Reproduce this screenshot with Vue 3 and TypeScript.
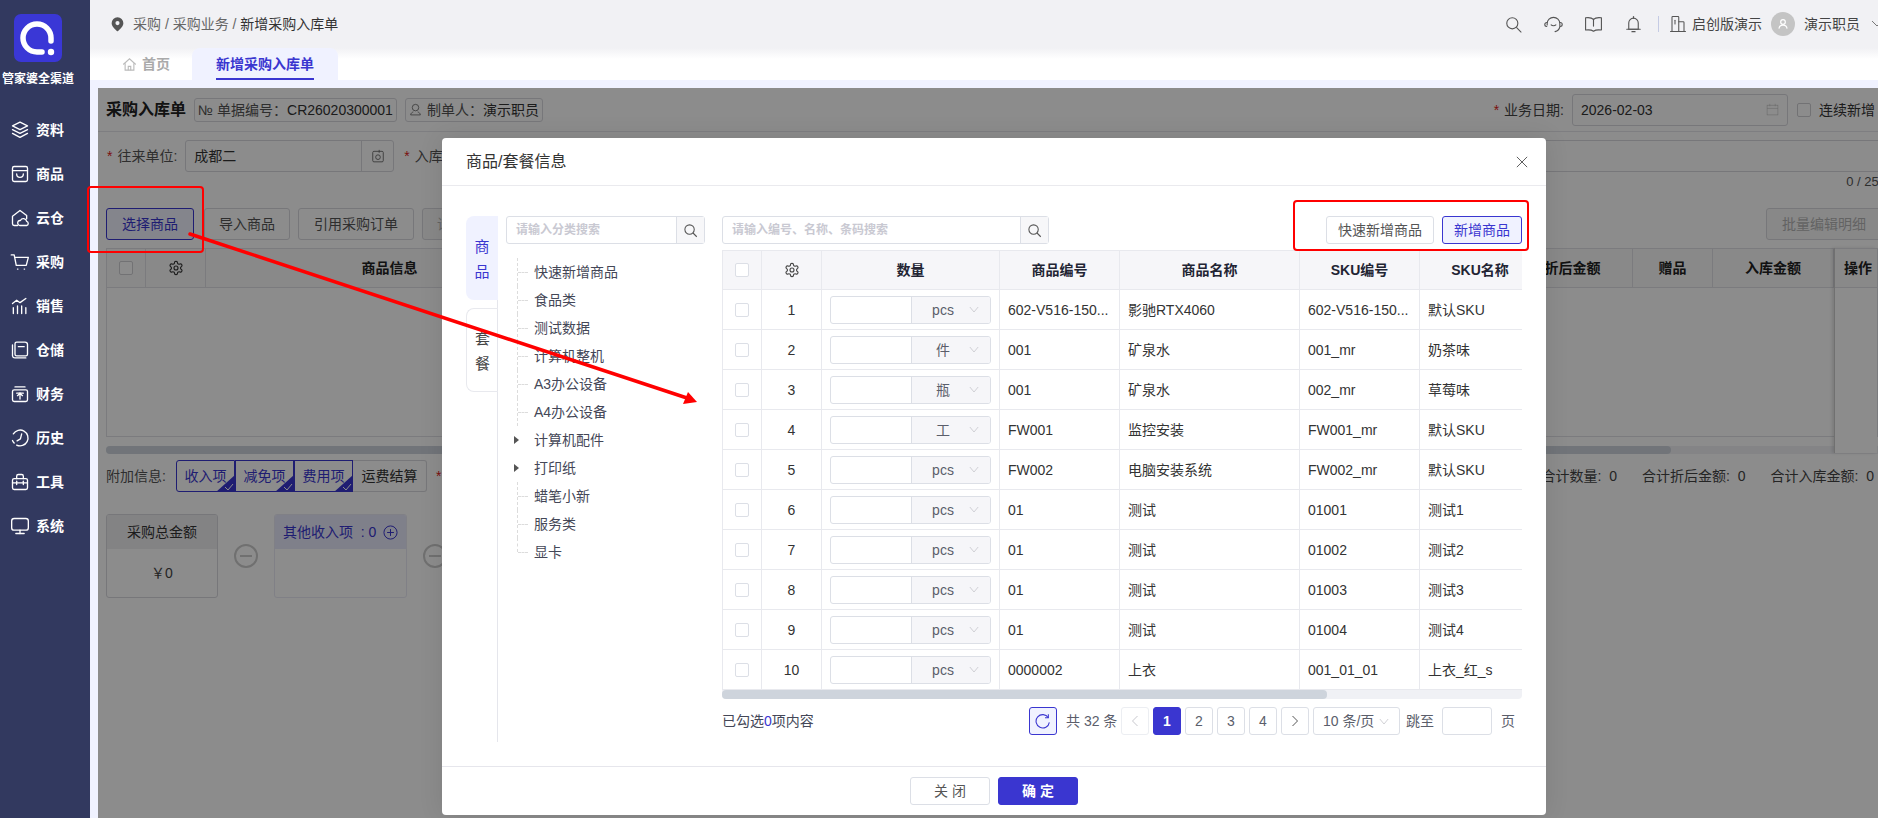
<script setup lang="ts">
const navItems = [
  { label: '资料', paths: ['M12 2.5 21 7l-9 4.5L3 7z', 'M3 11.5 12 16l9-4.5', 'M3 16l9 4.8 9-4.8'] },
  { label: '商品', paths: ['M5 3h14a2 2 0 0 1 2 2v14a2 2 0 0 1-2 2H5a2 2 0 0 1-2-2V5a2 2 0 0 1 2-2z', 'M3 8h18', 'M8 12a4 4 0 0 0 8 0'] },
  { label: '云仓', paths: ['M9 21H5a2 2 0 0 1-2-2V10l9-7 8 6v4', 'M12 21a3 3 0 0 1 .5-6 4 4 0 0 1 7.5 1 2.6 2.6 0 0 1 0 5z'] },
  { label: '采购', paths: ['M1.5 3.5H5l2.5 12.5h12L22 6.5H5.8', 'M9 20.5h.5', 'M17 20.5h.5'] },
  { label: '销售', paths: ['M4 21v-7', 'M9 21v-9', 'M14 21v-9', 'M19 21v-7', 'M3 9l5-4 4 3 7-5'] },
  { label: '仓储', paths: ['M8 2.5h10a3 3 0 0 1 3 3V17a2 2 0 0 1-2 2H8a2 2 0 0 1-2-2V4.500a2 2 0 0 1 2-2z', 'M3 6v13a3 3 0 0 0 3 2.500h13', 'M10 8h7'] },
  { label: '财务', paths: ['M5 7h14a2 2 0 0 1 2 2v10a2 2 0 0 1-2 2H5a2 2 0 0 1-2-2V9a2 2 0 0 1 2-2z', 'M6 3.500h12', 'M8 11h8', 'M12 11v7', 'M9 14l3-3 3 3'] },
  { label: '历史', paths: ['M8 20.500A9.500 9.500 0 1 0 4 7', 'M3 15a9.500 9.500 0 0 0 2 3', 'M14 7l-1.500 6-4 2.500'] },
  { label: '工具', paths: ['M5 8h14a2 2 0 0 1 2 2v9a2 2 0 0 1-2 2H5a2 2 0 0 1-2-2v-9a2 2 0 0 1 2-2z', 'M8 8V5a2 2 0 0 1 2-2h4a2 2 0 0 1 2 2v3', 'M3 13h18', 'M8 11v4', 'M16 11v4'] },
  { label: '系统', paths: ['M5 3h14a3 3 0 0 1 3 3v8a3 3 0 0 1-3 3H5a3 3 0 0 1-3-3V6a3 3 0 0 1 3-3z', 'M12 17v4', 'M7 21h10'] },
]

const gear = 'M12.22 2h-.44a2 2 0 0 0-2 2v.18a2 2 0 0 1-1 1.73l-.43.25a2 2 0 0 1-2 0l-.15-.08a2 2 0 0 0-2.73.73l-.22.38a2 2 0 0 0 .73 2.73l.15.1a2 2 0 0 1 1 1.72v.51a2 2 0 0 1-1 1.74l-.15.09a2 2 0 0 0-.73 2.73l.22.38a2 2 0 0 0 2.73.73l.15-.08a2 2 0 0 1 2 0l.43.25a2 2 0 0 1 1 1.73V20a2 2 0 0 0 2 2h.44a2 2 0 0 0 2-2v-.18a2 2 0 0 1 1-1.73l.43-.25a2 2 0 0 1 2 0l.15.08a2 2 0 0 0 2.73-.73l.22-.39a2 2 0 0 0-.73-2.73l-.15-.08a2 2 0 0 1-1-1.74v-.5a2 2 0 0 1 1-1.74l.15-.09a2 2 0 0 0 .73-2.73l-.22-.38a2 2 0 0 0-2.73-.73l-.15.08a2 2 0 0 1-2 0l-.43-.25a2 2 0 0 1-1-1.73V4a2 2 0 0 0-2-2z'

const extras = [
  { label: '收入项', on: true },
  { label: '减免项', on: true },
  { label: '费用项', on: true },
  { label: '运费结算', on: false },
]

const tree = [
  { label: '快速新增商品' },
  { label: '食品类' },
  { label: '测试数据' },
  { label: '计算机整机' },
  { label: 'A3办公设备' },
  { label: 'A4办公设备' },
  { label: '计算机配件', caret: true },
  { label: '打印纸', caret: true },
  { label: '蜡笔小新' },
  { label: '服务类' },
  { label: '显卡', last: true },
]

const rows = [
  { n: 1, unit: 'pcs', code: '602-V516-150...', name: '影驰RTX4060', sku: '602-V516-150...', skuName: '默认SKU' },
  { n: 2, unit: '件', code: '001', name: '矿泉水', sku: '001_mr', skuName: '奶茶味' },
  { n: 3, unit: '瓶', code: '001', name: '矿泉水', sku: '002_mr', skuName: '草莓味' },
  { n: 4, unit: '工', code: 'FW001', name: '监控安装', sku: 'FW001_mr', skuName: '默认SKU' },
  { n: 5, unit: 'pcs', code: 'FW002', name: '电脑安装系统', sku: 'FW002_mr', skuName: '默认SKU' },
  { n: 6, unit: 'pcs', code: '01', name: '测试', sku: '01001', skuName: '测试1' },
  { n: 7, unit: 'pcs', code: '01', name: '测试', sku: '01002', skuName: '测试2' },
  { n: 8, unit: 'pcs', code: '01', name: '测试', sku: '01003', skuName: '测试3' },
  { n: 9, unit: 'pcs', code: '01', name: '测试', sku: '01004', skuName: '测试4' },
  { n: 10, unit: 'pcs', code: '0000002', name: '上衣', sku: '001_01_01', skuName: '上衣_红_s' },
]

const pages = [1, 2, 3, 4]
</script>

<template>
  <div class="app">
    <aside class="sidebar">
      <svg class="logo" viewBox="0 0 48 48">
        <rect width="48" height="48" rx="7" fill="#3a37d6" />
        <path d="M37 27v-3A14 14 0 1 0 23 38h5" fill="none" stroke="#fff" stroke-width="5.500" stroke-linecap="round" />
        <circle cx="37" cy="38" r="3.200" fill="#fff" />
      </svg>
      <div class="brand">管家婆全渠道</div>
      <nav class="nav">
        <div v-for="item in navItems" :key="item.label" class="nav-item">
          <svg class="nav-icon" viewBox="0 0 24 24">
            <path v-for="d in item.paths" :key="d" :d="d" />
          </svg>
          <span>{{ item.label }}</span>
        </div>
      </nav>
    </aside>

    <div class="main">
      <header class="topbar">
        <div class="crumbs">
          <svg class="pin" viewBox="3 1 18 23">
            <path d="M12 1.500a9 9 0 0 0-9 9c0 6 9 12.500 9 12.500s9-6.500 9-12.500a9 9 0 0 0-9-9zm0 12a3.200 3.200 0 1 1 0-6.400 3.200 3.200 0 0 1 0 6.400z" />
          </svg>
          <span>采购 / 采购业务 / <b>新增采购入库单</b></span>
        </div>
        <div class="top-tools">
          <svg class="tool" viewBox="0 0 24 24"><circle cx="10.500" cy="10.500" r="7" /><path d="M16 16l5.500 5.500" /></svg>
          <svg class="tool" viewBox="0 0 24 24"><path d="M4 12.500V11a8 8 0 0 1 16 0v3" /><path d="M3.500 9.500a2 2 0 0 0 0 5" /><path d="M20.500 9.500a2 2 0 0 1 0 5" /><path d="M20 15a8 8 0 0 1-6 6" /><path d="M9 12.500c1.500 1.500 4.500 1.500 6 0" /></svg>
          <svg class="tool" viewBox="0 0 24 24"><path d="M12 5.500C10 3.500 6 3 2 3.500V19c4-.5 8 0 10 1.500 2-1.500 6-2 10-1.500V3.500c-4-.5-8 0-10 2z" /><path d="M12 5.500V14" /></svg>
          <svg class="tool" viewBox="0 0 24 24"><path d="M6 18V10a6 6 0 0 1 12 0v8z" /><path d="M3.500 18h17" /><path d="M12 2v2" /><path d="M10 21h4" /></svg>
          <i class="top-sep"></i>
          <div class="company">
            <svg class="tool small" viewBox="0 0 24 24"><path d="M2 22h20" /><path d="M4 22V3a1 1 0 0 1 1-1h7a1 1 0 0 1 1 1v19" /><path d="M13 9h6a1 1 0 0 1 1 1v12" /><path d="M8 7v5" /></svg>
            <span>启创版演示</span>
          </div>
          <div class="avatar">
            <svg viewBox="0 0 24 24"><circle cx="12" cy="8.500" r="4" /><path d="M5 20c.5-4 3-6 7-6s6.500 2 7 6" /></svg>
          </div>
          <span class="username">演示职员</span>
          <svg class="user-chevron" viewBox="0 0 12 8"><path d="M1 1l5 5 5-5" /></svg>
        </div>
      </header>

      <div class="tabs">
        <div class="tab-home">
          <svg viewBox="0 0 24 24"><path d="M2 12 12 3l10 9" /><path d="M5 10v11h14V10" /><path d="M10 21v-6h4v6" /></svg>
          <span>首页</span>
        </div>
        <div class="tab-active"><span>新增采购入库单</span></div>
      </div>

      <section class="content">
        <div class="head-row">
          <h1>采购入库单</h1>
          <div class="tag"><span class="no">№</span><em>单据编号：</em><span>CR26020300001</span></div>
          <div class="tag">
            <svg class="tag-user" viewBox="0 0 24 24"><circle cx="12" cy="8.500" r="6" /><path d="M3 22c.5-3.500 3-5 5-5.500M21 22c-.5-3.500-3-5-5-5.500M3 22h18" /></svg>
            <em>制单人：</em><span>演示职员</span>
          </div>
          <div class="date-group">
            <span class="req">*</span><label>业务日期:</label>
            <div class="date-input">
              <span>2026-02-03</span>
              <svg viewBox="0 0 24 24"><rect x="2" y="4" width="20" height="18" /><path d="M2 10h20M7 1.500V6M17 1.500V6" /></svg>
            </div>
            <i class="box"></i>
            <span class="cont">连续新增</span>
          </div>
        </div>

        <div class="form-row">
          <span class="req">*</span><label>往来单位:</label>
          <div class="field partner">
            <span class="field-val">成都二</span>
            <span class="field-btn">
              <svg viewBox="0 0 24 24"><path d="M5 4h14a2 2 0 0 1 2 2v14a2 2 0 0 1-2 2H5a2 2 0 0 1-2-2V6a2 2 0 0 1 2-2z" /><circle cx="12" cy="14" r="4" /><path d="M14 1.500v5" /></svg>
            </span>
          </div>
          <span class="req second">*</span><label>入库仓库:</label>
          <div class="field long"></div>
        </div>
        <div class="count">0 / 256</div>

        <div class="toolbar">
          <button class="btn primary">选择商品</button>
          <button class="btn">导入商品</button>
          <button class="btn">引用采购订单</button>
          <button class="btn muted">请选择</button>
          <button class="btn muted right">批量编辑明细</button>
        </div>

        <div class="page-table">
          <div class="pt-head">
            <div class="pt-cell"><i class="box"></i></div>
            <div class="pt-cell">
              <svg class="gear" viewBox="0 0 24 24"><path :d="gear" /><circle cx="12" cy="12" r="3" /></svg>
            </div>
            <div class="pt-cell">商品信息</div>
            <div class="pt-cell"></div>
            <div class="pt-cell">折后金额</div>
            <div class="pt-cell">赠品</div>
            <div class="pt-cell">入库金额</div>
            <div class="pt-cell"></div>
          </div>
          <div class="pt-body"></div>
          <div class="pt-fixed"><div class="pt-fixed-head">操作</div></div>
        </div>
        <div class="page-scroll"><i></i></div>

        <div class="extra-row">
          <label>附加信息:</label>
          <div class="extras">
            <div v-for="e in extras" :key="e.label" class="extra" :class="{ on: e.on }">
              {{ e.label }}
              <svg v-if="e.on" class="corner" viewBox="0 0 19 17">
                <path d="M19 0v17H0z" fill="#3a36d0" />
                <path d="M9 12l3 3 5-6" fill="none" stroke="#fff" stroke-width="1" />
              </svg>
            </div>
          </div>
          <span class="req third">*</span>
          <div class="totals">
            <span>合计数量:&nbsp; 0</span>
            <span>合计折后金额:&nbsp; 0</span>
            <span>合计入库金额:&nbsp; 0</span>
          </div>
        </div>

        <div class="cards">
          <div class="card">
            <div class="card-head">采购总金额</div>
            <div class="card-body">￥0</div>
          </div>
          <div class="minus"><i></i></div>
          <div class="card income">
            <div class="card-head">
              <span>其他收入项 &nbsp;: 0</span>
              <svg viewBox="0 0 24 24"><circle cx="12" cy="12" r="10.500" /><path d="M12 6.500v11M6.500 12h11" /></svg>
            </div>
            <div class="card-body"></div>
          </div>
          <div class="minus"><i></i></div>
        </div>

        <div class="mask"></div>
      </section>
    </div>

    <div class="modal">
      <div class="modal-head">
        <span>商品/套餐信息</span>
        <svg viewBox="0 0 14 14"><path d="M1 1l12 12M13 1 1 13" /></svg>
      </div>
      <div class="modal-body">
        <div class="side-tabs">
          <div class="side-tab active">商品</div>
          <div class="side-tab">套餐</div>
        </div>
        <div class="cat">
          <div class="search">
            <span class="ph">请输入分类搜索</span>
            <span class="search-btn"><svg viewBox="0 0 24 24"><circle cx="10.500" cy="10.500" r="7.500" /><path d="M16 16l6 6" /></svg></span>
          </div>
          <ul class="tree">
            <li v-for="t in tree" :key="t.label" :class="{ caret: t.caret, last: t.last }">
              <i class="branch"></i>
              <span>{{ t.label }}</span>
            </li>
          </ul>
        </div>
        <div class="goods">
          <div class="goods-top">
            <div class="search wide">
              <span class="ph">请输入编号、名称、条码搜索</span>
              <span class="search-btn"><svg viewBox="0 0 24 24"><circle cx="10.500" cy="10.500" r="7.500" /><path d="M16 16l6 6" /></svg></span>
            </div>
            <div class="goods-actions">
              <button class="mbtn">快速新增商品</button>
              <button class="mbtn blue">新增商品</button>
            </div>
          </div>
          <div class="gt-wrap">
            <div class="gt-row gt-head">
              <div class="gc"><i class="box light"></i></div>
              <div class="gc"><svg class="gear dark" viewBox="0 0 24 24"><path :d="gear" /><circle cx="12" cy="12" r="3" /></svg></div>
              <div class="gc">数量</div>
              <div class="gc">商品编号</div>
              <div class="gc">商品名称</div>
              <div class="gc">SKU编号</div>
              <div class="gc">SKU名称</div>
            </div>
            <div v-for="r in rows" :key="r.n" class="gt-row">
              <div class="gc"><i class="box light"></i></div>
              <div class="gc">{{ r.n }}</div>
              <div class="gc">
                <div class="qty">
                  <span class="qty-input"></span>
                  <span class="qty-unit">
                    <span>{{ r.unit }}</span>
                    <svg viewBox="0 0 12 8"><path d="M1 1l5 6 5-6" /></svg>
                  </span>
                </div>
              </div>
              <div class="gc text"><span>{{ r.code }}</span></div>
              <div class="gc text"><span>{{ r.name }}</span></div>
              <div class="gc text"><span>{{ r.sku }}</span></div>
              <div class="gc text"><span>{{ r.skuName }}</span></div>
            </div>
          </div>
          <div class="gt-scroll"><i></i></div>
          <div class="gt-foot">
            <span class="picked">已勾选<em>0</em>项内容</span>
            <div class="pager">
              <span class="refresh"><svg viewBox="0 0 24 24"><path d="M20 7a10 10 0 1 0 1.500 7" /><path d="M20 2v5h-5" /></svg></span>
              <span class="total">共 32 条</span>
              <span class="pg disabled"><svg viewBox="0 0 8 12"><path d="M6.500 1 1.500 6l5 5" /></svg></span>
              <span v-for="p in pages" :key="p" class="pg" :class="{ current: p === 1 }">{{ p }}</span>
              <span class="pg"><svg viewBox="0 0 8 12"><path d="M1.500 1l5 5-5 5" /></svg></span>
              <span class="size">10 条/页<svg viewBox="0 0 12 8"><path d="M1 1l5 6 5-6" /></svg></span>
              <span class="jump">跳至</span>
              <span class="jump-input"></span>
              <span class="jump-end">页</span>
            </div>
          </div>
        </div>
      </div>
      <div class="modal-foot">
        <button class="fbtn">关 闭</button>
        <button class="fbtn ok">确 定</button>
      </div>
    </div>

    <i class="mark mark-a"></i>
    <i class="mark mark-b"></i>
    <svg class="arrow" viewBox="0 0 1878 818">
      <path d="M190 234 690 399" />
      <polygon points="697,402 688,392 683,404" />
    </svg>
  </div>
</template>

<style>
html, body { margin: 0; padding: 0; background: #f0f2ff; }
</style>

<style scoped>
* { box-sizing: border-box; }
.app {
  position: relative;
  display: flex;
  width: 1878px;
  height: 818px;
  overflow: hidden;
  font: 14px/20px "Liberation Sans", "Noto Sans CJK SC", sans-serif;
  color: #333;
}
i { font-style: normal; display: block; }
em { font-style: normal; }
button { font: inherit; cursor: default; }
svg { display: block; fill: none; }

.sidebar { width: 90px; flex: none; background: #32395f; color: #fff; }
.logo { width: 48px; height: 48px; margin: 14px 0 0 14px; }
.brand { margin: 8px 0 0 2px; font-size: 12px; line-height: 18px; font-weight: 700; white-space: nowrap; }
.nav { margin-top: 20px; }
.nav-item { display: flex; align-items: center; height: 44px; padding-left: 10px; font-weight: 700; gap: 6px; }
.nav-icon { width: 20px; height: 20px; stroke: #fff; stroke-width: 1.600; stroke-linejoin: round; stroke-linecap: round; }

.main { flex: 1; min-width: 0; display: flex; flex-direction: column; background: #f0f2ff; }
.topbar { height: 48px; flex: none; display: flex; align-items: center; justify-content: space-between; background: #f1f1f4; color: #666; }
.crumbs { display: flex; align-items: center; gap: 9px; padding-left: 21px; }
.crumbs b { font-weight: 400; color: #333; }
.pin { width: 13px; height: 15px; fill: #555; }
.top-tools { display: flex; align-items: center; }
.tool { width: 19px; height: 19px; stroke: #555; stroke-width: 1.400; stroke-linejoin: round; stroke-linecap: round; margin-right: 21px; }
.tool.small { width: 18px; height: 18px; margin-right: 5px; }
.top-sep { width: 1px; height: 16px; background: #c5cbe4; margin: 0 10px 0 -6px; }
.company { display: flex; align-items: center; color: #444; }
.avatar { width: 24px; height: 24px; border-radius: 50%; background: #c4c4c4; margin: 0 9px 0 9px; padding: 5px; }
.avatar svg { stroke: #fff; stroke-width: 2; width: 14px; height: 14px; }
.username { color: #444; }
.user-chevron { width: 12px; height: 8px; stroke: #777; margin: 0 -5px 0 11px; }

.tabs { height: 32px; flex: none; display: flex; background: linear-gradient(#f1f1f4, #fff 11px); }
.tab-home { width: 102px; display: flex; align-items: center; gap: 5px; padding: 0 0 0 32px; font-weight: 700; color: #aaa; }
.tab-home svg { width: 15px; height: 15px; stroke: #bbb; stroke-width: 1.800; }
.tab-active { width: 146px; border-radius: 8px 8px 0 0; background: #f0f2ff; display: flex; justify-content: center; font-weight: 700; color: #3a36d0; }
.tab-active span { height: 32px; line-height: 32px; border-bottom: 2px solid #3a36d0; }

.content { position: relative; flex: none; height: 730px; margin: 8px 0 0 8px; padding-left: 8px; background: #fff; overflow: hidden; }
.mask { position: absolute; inset: 0; background: rgba(0, 0, 0, 0.45); }
.head-row { height: 44px; margin-left: -8px; padding-left: 8px; display: flex; align-items: center; border-bottom: 1px solid #e5e6ec; }
.head-row h1 { margin: 0 8px 0 0; font-size: 16px; font-weight: 700; color: #222; }
.tag { height: 24px; display: flex; align-items: center; border: 1px solid #d9d9de; border-radius: 3px; padding: 0 3px; margin-right: 8px; background: #fff; white-space: nowrap; }
.tag em { color: #555; }
.tag .no { color: #555; width: 19px; }
.tag-user { width: 13px; height: 13px; stroke: #666; stroke-width: 1.500; margin-right: 5px; }
.date-group { margin-left: auto; display: flex; align-items: center; padding-right: 3px; color: #444; }
.req { color: #e02020; margin-right: 5px; }
.date-input { width: 216px; height: 32px; margin: 0 9px 0 8px; display: flex; align-items: center; justify-content: space-between; border: 1px solid #d9d9de; border-radius: 3px; padding: 0 8px; color: #333; }
.date-input svg { width: 13px; height: 13px; stroke: #bbb; }
.box { width: 14px; height: 14px; border: 1px solid #d0d0d4; border-radius: 2px; background: #fff; flex: none; }
.box.light { border-color: #dcdfe6; }
.cont { margin-left: 8px; color: #333; }

.form-row { display: flex; align-items: center; margin-top: 8px; height: 32px; color: #555; white-space: nowrap; }
.form-row .req { margin-left: 1px; }
.form-row .second { margin-left: 10px; }
.field { height: 32px; flex: none; margin-left: 8px; border: 1px solid #d9d9de; border-radius: 3px; display: flex; align-items: center; }
.partner { width: 209px; }
.field-val { flex: 1; padding-left: 8px; color: #333; }
.field-btn { width: 32px; height: 30px; border-left: 1px solid #d9d9de; display: flex; align-items: center; justify-content: center; }
.field-btn svg { width: 14px; height: 14px; stroke: #666; stroke-width: 1.500; }
.long { width: 1500px; }
.count { height: 20px; margin: 0 -8px 0 0; padding-top: 1px; font-size: 13px; line-height: 18px; text-align: right; color: #555; }

.toolbar { display: flex; margin-top: 16px; height: 32px; }
.btn { height: 32px; padding: 0 14px; margin-right: 8px; border: 1px solid #d9d9de; border-radius: 3px; background: #fff; color: #555; white-space: nowrap; }
.btn.primary { padding: 0 15px; margin-right: 10px; border-color: #3a36d0; background: #f0f2ff; color: #3a36d0; }
.btn:nth-child(3) { padding: 0 15px; }
.btn.muted { color: #b5b5b5; background: #f8f8f8; }
.btn.right { margin: 0 -4px 0 auto; padding: 0 15px; }

.page-table { position: relative; margin-top: 8px; width: 1772px; height: 189px; border: 1px solid #e0e1e6; border-top: 0; background: #fff; }
.pt-head { display: grid; grid-template-columns: 39px 60px 368px 1fr 120px 80px 121px 43px; height: 40px; background: #fafafa; border-bottom: 1px solid #e0e1e6; border-top: 1px solid #e0e1e6; font-weight: 700; color: #222; }
.pt-cell { display: flex; align-items: center; justify-content: center; border-right: 1px solid #e0e1e6; }
.gear { width: 16px; height: 16px; stroke: #333; stroke-width: 1.700; }
.gear.dark { stroke: #444; }
.pt-fixed { position: absolute; right: 0; top: 0; bottom: -17px; width: 43px; background: #fff; border-left: 1px solid #ccc; box-shadow: -2px 0 3px rgba(0, 0, 0, 0.12); }
.pt-fixed-head { height: 40px; line-height: 38px; padding-left: 9px; background: #fafafa; border-top: 1px solid #e0e1e6; border-bottom: 1px solid #e0e1e6; font-weight: 700; color: #222; }
.page-scroll { margin-top: 9px; width: 1790px; height: 8px; border-radius: 4px; background: #f0f1f5; }
.page-scroll i { width: 1565px; height: 8px; border-radius: 4px; background: #ced4dc; }

.extra-row { display: flex; align-items: center; height: 32px; margin-top: 6px; color: #555; }
.extras { display: flex; margin-left: 10px; }
.extra { position: relative; height: 32px; line-height: 30px; padding: 0 8px; width: 59px; border: 1px solid #d9d9de; border-left-width: 0; white-space: nowrap; text-align: center; color: #333; }
.extra.on { border: 1px solid #3a36d0; color: #3a36d0; padding: 0; }
.extra.on:first-child { border-radius: 3px 0 0 3px; }
.extra:last-child { width: 74px; border-radius: 0 3px 3px 0; }
.corner { position: absolute; right: -1px; bottom: -1px; width: 19px; height: 17px; }
.third { margin-left: 9px; }
.totals { margin-left: auto; padding-right: 4px; display: flex; gap: 25px; color: #444; white-space: nowrap; }

.cards { display: flex; align-items: center; margin-top: 22px; }
.card { width: 112px; height: 84px; border: 1px solid #d9d9de; border-radius: 3px; overflow: hidden; text-align: center; }
.card-head { height: 34px; line-height: 34px; background: #eeeef0; color: #333; }
.card-body { height: 48px; line-height: 48px; color: #444; }
.minus { width: 24px; height: 24px; margin: 0 16px; border: 2px solid #ccc; border-radius: 50%; padding: 9px 4px; }
.minus i { height: 2px; background: #ccc; }
.income { width: 133px; border-color: #eaeaf5; }
.income .card-head { display: flex; align-items: center; justify-content: space-between; padding: 0 8px; background: #e8e9fb; color: #3a36d0; white-space: nowrap; }
.income svg { width: 15px; height: 15px; stroke: #3a36d0; stroke-width: 1.600; }

.modal { position: absolute; left: 442px; top: 138px; width: 1104px; height: 677px; display: flex; flex-direction: column; background: #fff; border-radius: 4px; box-shadow: 0 0 24px rgba(0, 0, 0, 0.1); }
.modal-head { height: 48px; flex: none; display: flex; align-items: center; justify-content: space-between; padding: 1px 18px 0 24px; border-bottom: 1px solid #eaeaee; font-size: 16px; color: #333; }
.modal-head svg { width: 12px; height: 12px; stroke: #555; stroke-width: 1.100; }
.modal-body { flex: 1; display: flex; padding: 30px 0 0 24px; }
.side-tabs { width: 32px; height: 526px; flex: none; border-right: 1px solid #e5e6ec; display: flex; flex-direction: column; gap: 8px; }
.side-tab { width: 32px; height: 84px; padding: 17px 8px 0; border: 1px solid #e8e9ee; border-right: 0; border-radius: 8px 0 0 8px; font-size: 15px; line-height: 25px; text-align: center; color: #444; }
.side-tab.active { border: 0; padding-top: 18px; background: #f0f2ff; color: #3a36d0; }
.cat { width: 199px; margin-left: 8px; flex: none; }
.search { display: flex; height: 28px; border: 1px solid #dcdfe6; border-radius: 3px; align-items: center; justify-content: space-between; font-size: 12px; }
.ph { padding-left: 9px; color: #c9c9d2; font-weight: 700; font-size: 12px; }
.search-btn { width: 28px; height: 26px; background: #f7f7f9; border-left: 1px solid #dcdfe6; display: flex; align-items: center; justify-content: center; }
.search-btn svg { width: 15px; height: 15px; stroke: #555; stroke-width: 1.700; }
.search.wide { width: 327px; }
.tree { list-style: none; margin: 14px 0 0 11px; padding: 0; color: #444757; }
.tree li { position: relative; height: 28px; line-height: 28px; padding-left: 17px; white-space: nowrap; }
.branch { position: absolute; left: 0; top: 0; bottom: 0; border-left: 1px dashed #dcdcdc; width: 11px; }
.branch::after { content: ""; position: absolute; left: 0; top: 14px; width: 10px; border-top: 1px dashed #dcdcdc; }
.tree li.last .branch { bottom: 14px; }
.tree li.caret .branch { border: 0; left: -3px; top: 9px; bottom: auto; width: 0; height: 0; border-left: 5px solid #555; border-top: 4px solid transparent; border-bottom: 4px solid transparent; margin-top: 1px; }
.tree li.caret .branch::after { display: none; }

.goods { width: 800px; margin-left: 17px; flex: none; }
.goods-top { display: flex; justify-content: space-between; height: 34px; }
.goods-actions { display: flex; gap: 8px; }
.mbtn { height: 28px; width: 108px; padding: 0; border: 1px solid #dcdfe6; border-radius: 3px; background: #fff; color: #555; font-size: 14px; white-space: nowrap; }
.mbtn.blue { width: 80px; border-color: #3a36d0; background: #f0f2ff; color: #3a36d0; }
.gt-wrap { width: 800px; overflow: hidden; border-left: 1px solid #e8e9ee; border-top: 1px solid #e8e9ee; }
.gt-row { display: grid; grid-template-columns: 39px 60px 178px 120px 180px 120px 120px; width: 817px; height: 40px; border-bottom: 1px solid #e8e9ee; }
.gt-head { height: 39px; background: #f6f6f9; font-weight: 700; color: #222433; }
.gc { display: flex; align-items: center; justify-content: center; min-width: 0; border-right: 1px solid #e8e9ee; }
.gc.text { justify-content: flex-start; padding: 0 6px 0 8px; }
.gc.text span { white-space: nowrap; }
.gt-row .gc:last-child { border-right: 0; }
.qty { display: flex; width: 161px; height: 28px; border: 1px solid #dcdfe6; border-radius: 3px; overflow: hidden; }
.qty-input { width: 81px; border-right: 1px solid #dcdfe6; }
.qty-unit { flex: 1; display: flex; align-items: center; background: #f6f6f9; color: #5b5e6b; padding-left: 19px; }
.qty-unit span { width: 24px; text-align: center; }
.qty-unit svg { width: 10px; height: 7px; stroke: #c8c8ce; margin-left: 14px; }
.gt-scroll { height: 9px; border-radius: 0 0 4px 4px; background: #f0f1f5; }
.gt-scroll i { width: 605px; height: 9px; border-radius: 4px; background: #ced4dc; }
.gt-foot { display: flex; align-items: center; justify-content: space-between; height: 28px; margin-top: 8px; }
.picked { color: #444757; }
.picked em { color: #3a36d0; }
.pager { display: flex; align-items: center; padding-right: 8px; color: #5b5e6b; white-space: nowrap; }
.refresh { width: 28px; height: 28px; margin-right: 9px; border: 1px solid #3a36d0; border-radius: 3px; background: #f0f2ff; display: flex; align-items: center; justify-content: center; }
.refresh svg { width: 16px; height: 16px; stroke: #3a36d0; stroke-width: 1.600; }
.total { margin-right: 4px; width: 51px; }
.pg { width: 28px; height: 28px; margin-right: 4px; border: 1px solid #dcdfe6; border-radius: 3px; display: flex; align-items: center; justify-content: center; }
.pg svg { width: 8px; height: 12px; stroke: #555; }
.pg.disabled svg { stroke: #c8c8ce; }
.pg.disabled { border-color: #eceef2; }
.pg.current { background: #3a36d0; border-color: #3a36d0; color: #fff; font-weight: 700; }
.size { width: 87px; height: 28px; border: 1px solid #dcdfe6; border-radius: 3px; display: flex; align-items: center; justify-content: space-between; padding: 0 10px 0 9px; margin-right: 6px; }
.size svg { width: 10px; height: 7px; stroke: #c8c8ce; }
.jump { width: 28px; }
.jump-input { width: 50px; height: 28px; margin: 0 9px 0 8px; border: 1px solid #dcdfe6; border-radius: 3px; }
.jump-end { width: 13px; }
.modal-foot { height: 49px; flex: none; display: flex; justify-content: center; align-items: flex-start; gap: 8px; padding-top: 10px; border-top: 1px solid #e6e6ec; }
.fbtn { width: 80px; height: 28px; padding: 0; border: 1px solid #dcdfe6; border-radius: 3px; background: #fff; color: #555; }
.fbtn.ok { background: #3a36d0; border-color: #3a36d0; color: #fff; font-weight: 700; }

.mark { position: absolute; border: 2px solid #f00; border-radius: 4px; pointer-events: none; }
.mark-a { left: 87px; top: 186px; width: 117px; height: 67px; }
.mark-b { left: 1293px; top: 200px; width: 236px; height: 51px; }
.arrow { position: absolute; left: 0; top: 0; width: 1878px; height: 818px; pointer-events: none; }
.arrow path { stroke: #f00; stroke-width: 3.500; stroke-linecap: round; }
.arrow polygon { fill: #f00; }
</style>
